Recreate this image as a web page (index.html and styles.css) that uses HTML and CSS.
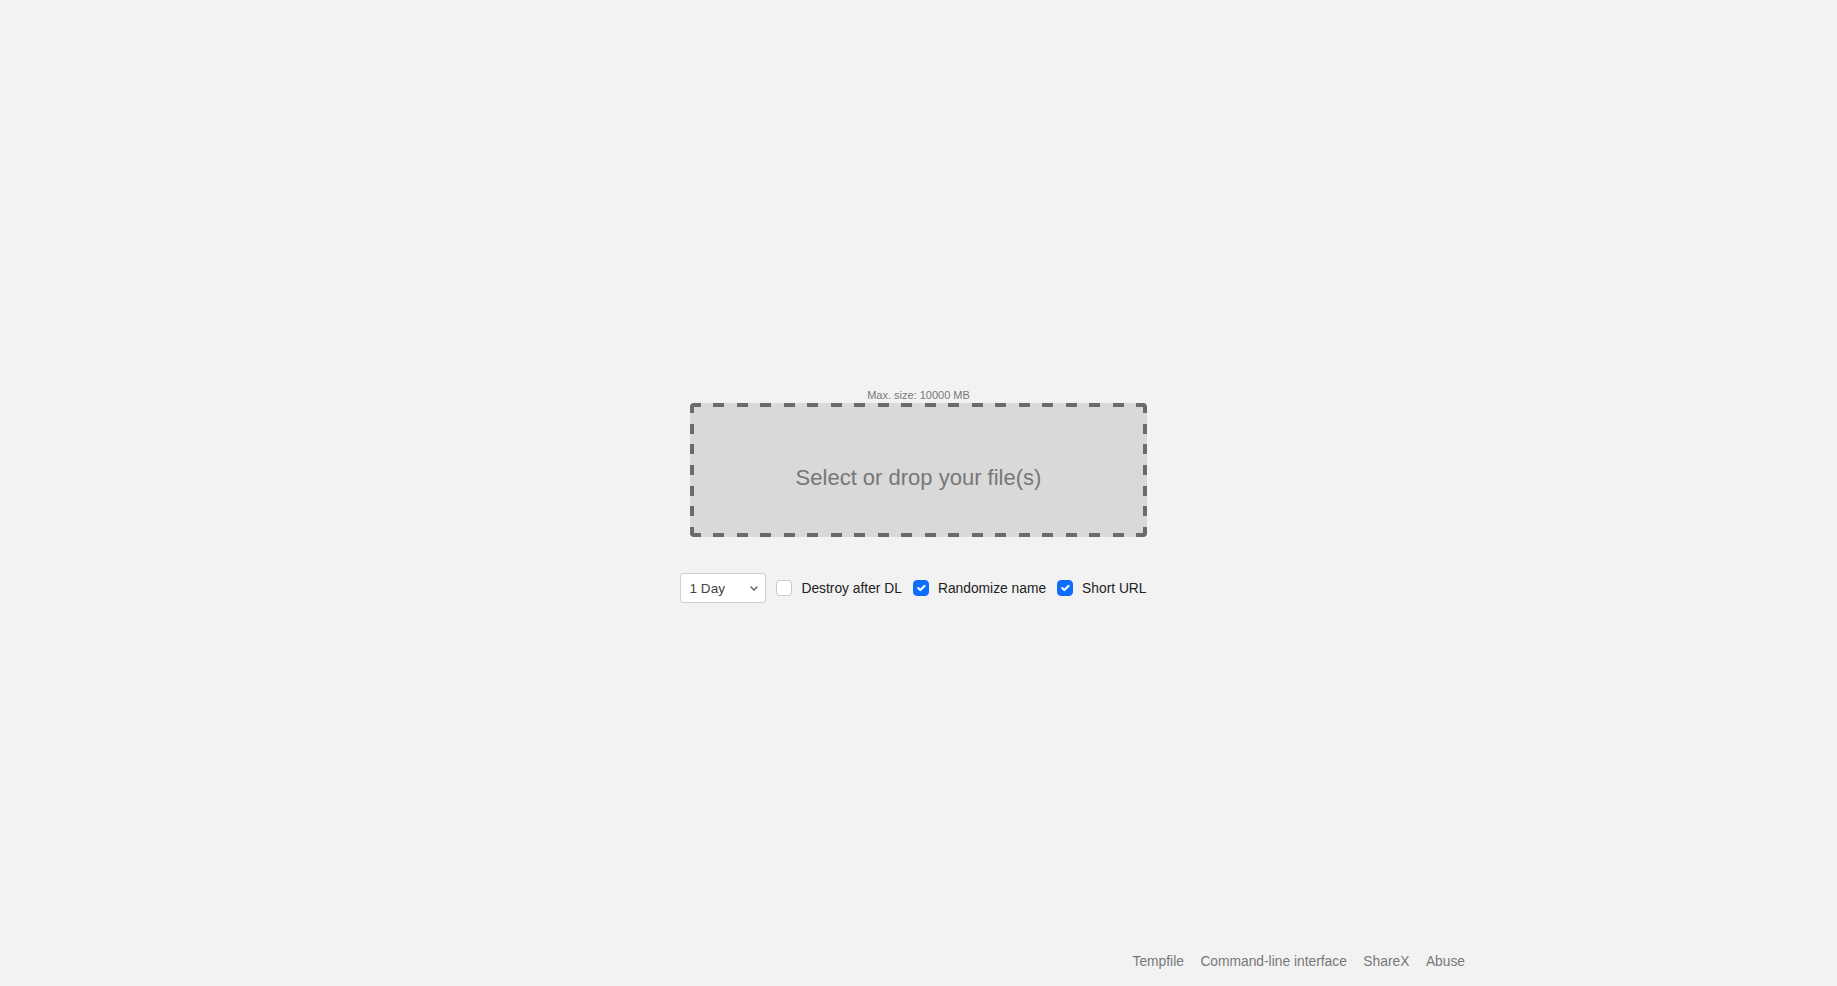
FILE: index.html
```html
<!DOCTYPE html>
<html lang="en">
<head>
<meta charset="utf-8">
<title>Tempfile</title>
<link rel="stylesheet" href="styles.css">
</head>
<body>
<div class="page">
  <main class="main">
    <div class="upload">
      <div class="maxsize">Max. size: 10000 MB</div>
      <label class="dropzone">
        <span class="droptext">Select or drop your file(s)</span>
      </label>
    </div>
    <form class="options">
      <select class="expire">
        <option>1 Day</option>
        <option>1 Hour</option>
        <option>1 Week</option>
      </select>
      <label class="opt"><input type="checkbox" class="check"><span>Destroy after DL</span></label>
      <label class="opt"><input type="checkbox" class="check" checked><span>Randomize name</span></label>
      <label class="opt"><input type="checkbox" class="check" checked><span>Short URL</span></label>
    </form>
  </main>
  <footer class="footer">
    <a class="flink" href="#">Tempfile</a>
    <a class="flink" href="#">Command-line interface</a>
    <a class="flink" href="#">ShareX</a>
    <a class="flink" href="#">Abuse</a>
  </footer>
</div>
</body>
</html>
```

FILE: styles.css
```css
html, body {
  margin: 0;
  padding: 0;
  height: 100%;
  background: #f2f2f2;
  font-family: "Liberation Sans", Arial, sans-serif;
}

.page {
  display: flex;
  flex-direction: column;
  height: 100%;
}

.main {
  flex: 1;
  display: flex;
  flex-direction: column;
  align-items: center;
  padding-top: 389px;
  box-sizing: border-box;
}

.upload {
  display: flex;
  flex-direction: column;
  align-items: center;
}

.maxsize {
  font-size: 11px;
  line-height: 13px;
  color: #777;
  margin-bottom: 1px;
}

.dropzone {
  display: flex;
  justify-content: center;
  box-sizing: border-box;
  width: 457px;
  height: 134px;
  border-radius: 4px;
  background-color: #d9d9d9;
  background-image:
    repeating-linear-gradient(90deg, #6b6b6b 0 11px, transparent 11px 23.474px),
    repeating-linear-gradient(90deg, #6b6b6b 0 11px, transparent 11px 23.474px),
    repeating-linear-gradient(180deg, #6b6b6b 0 10px, transparent 10px 20.667px),
    repeating-linear-gradient(180deg, #6b6b6b 0 10px, transparent 10px 20.667px);
  background-size: 100% 4px, 100% 4px, 4px 100%, 4px 100%;
  background-position: left top, left bottom, left top, right top;
  background-repeat: no-repeat;
  padding-top: 62px;
  cursor: pointer;
}

.droptext {
  font-size: 22px;
  line-height: 26px;
  color: #777;
}

.options {
  display: flex;
  align-items: center;
  margin-top: 36px;
  margin-right: 10px;
}

.expire {
  appearance: none;
  -webkit-appearance: none;
  width: 86px;
  height: 30px;
  box-sizing: border-box;
  border: 1px solid #d0d0d0;
  border-radius: 3px;
  background-color: #fff;
  background-image: url("data:image/svg+xml,%3csvg xmlns='http://www.w3.org/2000/svg' viewBox='0 0 8 5'%3e%3cpath fill='none' stroke='%23555' stroke-width='1.3' stroke-linecap='round' stroke-linejoin='round' d='M1 1l3 3 3-3'/%3e%3c/svg%3e");
  background-repeat: no-repeat;
  background-position: right 7px center;
  background-size: 8px 5px;
  color: #444;
  font-family: "Liberation Sans", Arial, sans-serif;
  font-size: 13.6px;
  padding: 0 0 0 8px;
  margin: 0 10px 0 0;
}

.opt {
  display: flex;
  align-items: center;
  font-size: 13.8px;
  color: #222;
  margin-right: 11px;
}

.opt:last-child {
  margin-right: 0;
}

.check {
  appearance: none;
  -webkit-appearance: none;
  width: 16px;
  height: 16px;
  margin: 0 9px 0 0;
  box-sizing: border-box;
  border: 1px solid #c8c8c8;
  border-radius: 4px;
  background: #fff;
}

.check:checked {
  border-color: #0d6efd;
  background-color: #0d6efd;
  background-image: url("data:image/svg+xml,%3csvg xmlns='http://www.w3.org/2000/svg' viewBox='0 0 20 20'%3e%3cpath fill='none' stroke='%23fff' stroke-linecap='round' stroke-linejoin='round' stroke-width='3' d='m6 10 3 3 6-6'/%3e%3c/svg%3e");
  background-repeat: no-repeat;
  background-position: center;
  background-size: 100% 100%;
}

.footer {
  display: flex;
  justify-content: flex-end;
  gap: 16.5px;
  padding: 0 372px 16px 0;
}

.flink {
  font-size: 13.8px;
  line-height: 16px;
  color: #777;
  text-decoration: none;
}
```
